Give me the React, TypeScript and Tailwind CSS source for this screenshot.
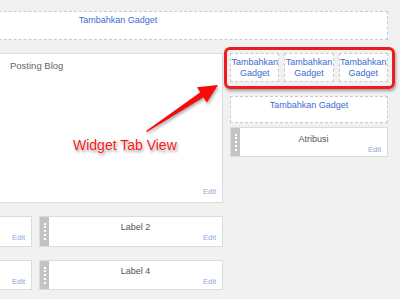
import React from 'react';

const font = "font-['Liberation_Sans',Arial,sans-serif]";

const Handle = () => (
  <div className="w-[9px] shrink-0 bg-[#c3c3c3] flex justify-center pt-[6px]">
    <div className="w-0 h-[17px] border-l-2 border-dotted border-white"/>
  </div>
);

const EditLink = () => (
  <div className="text-right text-[7.5px] leading-[9px] text-[#8ea6da] pr-[6px]">Edit</div>
);

const Widget = ({title, top = 'pt-[5px]'}: {title?: string; top?: string}) => (
  <div className="flex h-full bg-white border border-[#dcdcdc]">
    <Handle/>
    <div className={`flex-1 flex flex-col ${top}`}>
      <div className="h-[11px] text-center text-[9px] leading-[11px] text-[#555]">{title}</div>
      <EditLink/>
    </div>
  </div>
);

const AddGadget = ({className = ''}: {className?: string}) => (
  <div className={`bg-white border border-dashed border-[#c9c9c9] text-center text-[9px] leading-[11px] text-[#3d6bd0] ${className}`}>
    Tambahkan Gadget
  </div>
);

const App = () => {
  return (
    <div className={`relative w-[400px] h-[299px] overflow-hidden bg-[#f1f1f1] ${font}`}>
      <div className="w-[540px] -ml-[152px] pt-[11px]">
        <AddGadget className="h-[29px] pt-[3px]"/>

        <div className="mt-[13px] flex gap-[7px]">
          {/* kolom utama */}
          <div className="w-[375px]">
            <div className="h-[150px] bg-white border border-[#dcdcdc] flex flex-col justify-between">
              <div className="pl-[161px] pt-[6px] text-[9.5px] leading-[11px] text-[#666]">Posting Blog</div>
              <div className="pb-[6px]"><EditLink/></div>
            </div>
            <div className="mt-[13px] h-[31px] flex gap-[7px]">
              <div className="flex-1"><Widget/></div>
              <div className="flex-1"><Widget title="Label 2"/></div>
            </div>
            <div className="mt-[13px] h-[30px] flex gap-[7px]">
              <div className="flex-1"><Widget/></div>
              <div className="flex-1"><Widget title="Label 4"/></div>
            </div>
          </div>

          {/* sidebar */}
          <div className="w-[158px]">
            <div className="h-[29px] grid grid-cols-3 gap-[5px]">
              {[0, 1, 2].map(i => (
                <div key={i}
                     className="bg-white border border-dashed border-[#c9c9c9] flex items-center justify-center text-center text-[9px] leading-[11px] text-[#3d6bd0] pt-[1px]">
                  Tambahkan<br/>Gadget
                </div>
              ))}
            </div>
            <AddGadget className="mt-[14px] h-[27px] pt-[3px]"/>
            <div className="mt-[4px] h-[30px]">
              <Widget title="Atribusi" top="pt-[6px]"/>
            </div>
          </div>
        </div>
      </div>

      {/* anotasi */}
      <div className="absolute left-[224px] top-[47px] w-[171px] h-[42px] border-[3px] border-[#ee1c1c] rounded-[6px] shadow-[1px_2px_3px_rgba(0,0,0,0.35)]"/>
      <svg className="absolute left-0 top-0 drop-shadow-[1px_2px_1.5px_rgba(0,0,0,0.35)]" width="400" height="299">
        <polygon points="146,131 200.3,92.3 197,87.2 218,85 206.8,102.4 203.5,97.3 147,132" fill="#f80a0a"/>
      </svg>
      <div className="absolute left-[73px] top-[137px] text-[14px] leading-[16px] text-[#f41515] whitespace-nowrap [text-shadow:0_0_1px_#fff,0_0_2px_#fff,1px_2px_3px_rgba(0,0,0,0.45)]">
        Widget Tab View
      </div>
    </div>
  );
};

export default App;
